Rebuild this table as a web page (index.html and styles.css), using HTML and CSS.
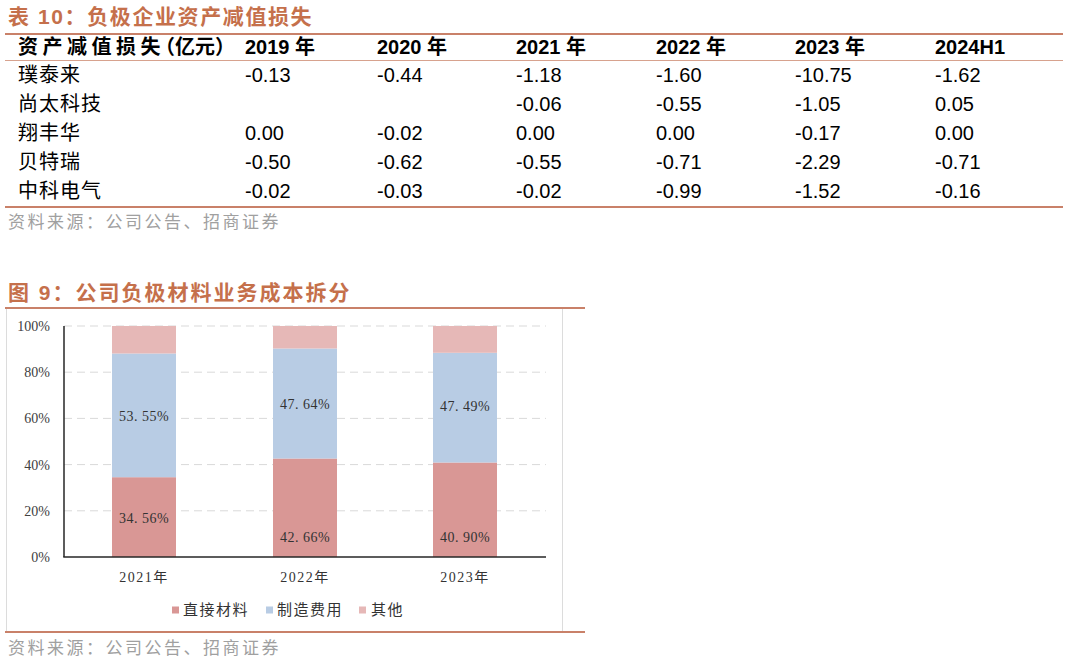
FILE: index.html
```html
<!DOCTYPE html>
<html lang="zh-CN">
<head>
<meta charset="utf-8">
<title>负极企业资产减值损失</title>
<link rel="stylesheet" href="styles.css">
</head>
<body>
<div class="page">
  <h2 class="caption">表 10：负极企业资产减值损失</h2>
  <table class="data">
    <colgroup>
      <col class="c-name"><col class="c-a"><col class="c-b"><col class="c-c"><col class="c-b"><col class="c-c"><col class="c-d">
    </colgroup>
    <thead>
      <tr><th><span class="h-main">资产减值损失</span><span class="h-unit">（亿元）</span></th><th>2019 年</th><th>2020 年</th><th>2021 年</th><th>2022 年</th><th>2023 年</th><th>2024H1</th></tr>
    </thead>
    <tbody>
      <tr><td>璞泰来</td><td>-0.13</td><td>-0.44</td><td>-1.18</td><td>-1.60</td><td>-10.75</td><td>-1.62</td></tr>
      <tr><td>尚太科技</td><td></td><td></td><td>-0.06</td><td>-0.55</td><td>-1.05</td><td>0.05</td></tr>
      <tr><td>翔丰华</td><td>0.00</td><td>-0.02</td><td>0.00</td><td>0.00</td><td>-0.17</td><td>0.00</td></tr>
      <tr><td>贝特瑞</td><td>-0.50</td><td>-0.62</td><td>-0.55</td><td>-0.71</td><td>-2.29</td><td>-0.71</td></tr>
      <tr><td>中科电气</td><td>-0.02</td><td>-0.03</td><td>-0.02</td><td>-0.99</td><td>-1.52</td><td>-0.16</td></tr>
    </tbody>
  </table>
  <p class="source">资料来源：公司公告、招商证券</p>

  <h2 class="caption fig-caption">图 9：公司负极材料业务成本拆分</h2>
  <div class="figure">
    <div class="chart">
      <svg class="chart-svg" width="555" height="322" viewBox="0 0 555 322">
        <g class="grid">
          <line x1="57" y1="17" x2="539" y2="17"/>
          <line x1="57" y1="63.2" x2="539" y2="63.2"/>
          <line x1="57" y1="109.4" x2="539" y2="109.4"/>
          <line x1="57" y1="155.6" x2="539" y2="155.6"/>
          <line x1="57" y1="201.8" x2="539" y2="201.8"/>
        </g>
        <g class="ylab">
          <text x="43" y="22">100%</text>
          <text x="43" y="68.2">80%</text>
          <text x="43" y="114.4">60%</text>
          <text x="43" y="160.6">40%</text>
          <text x="43" y="206.8">20%</text>
          <text x="43" y="253">0%</text>
        </g>
        <g class="bars">
          <rect class="s-red" x="105" y="168.2" width="64" height="79.8"/>
          <rect class="s-blue" x="105" y="44.5" width="64" height="123.7"/>
          <rect class="s-pink" x="105" y="17" width="64" height="27.5"/>
          <rect class="s-red" x="266" y="149.5" width="64" height="98.5"/>
          <rect class="s-blue" x="266" y="39.5" width="64" height="110"/>
          <rect class="s-pink" x="266" y="17" width="64" height="22.5"/>
          <rect class="s-red" x="426" y="153.5" width="64" height="94.5"/>
          <rect class="s-blue" x="426" y="43.8" width="64" height="109.7"/>
          <rect class="s-pink" x="426" y="17" width="64" height="26.8"/>
        </g>
        <g class="axis">
          <line x1="57" y1="17" x2="57" y2="248"/>
          <line x1="56.25" y1="248" x2="539" y2="248"/>
        </g>
        <g class="vlab">
          <text x="137" y="214">34. 56%</text>
          <text x="137" y="112">53. 55%</text>
          <text x="298" y="233">42. 66%</text>
          <text x="298" y="100">47. 64%</text>
          <text x="458" y="233">40. 90%</text>
          <text x="458" y="102">47. 49%</text>
        </g>
        <g class="xlab">
          <text x="137" y="273">2021年</text>
          <text x="298" y="273">2022年</text>
          <text x="458" y="273">2023年</text>
        </g>
        <g class="legend">
          <rect class="s-red" x="165" y="297.5" width="7" height="7"/>
          <text x="176" y="306">直接材料</text>
          <rect class="s-blue" x="259" y="297.5" width="7" height="7"/>
          <text x="270" y="306">制造费用</text>
          <rect class="s-pink" x="352" y="297.5" width="7" height="7"/>
          <text x="364" y="306">其他</text>
        </g>
      </svg>
    </div>
  </div>
  <p class="source source-bottom">资料来源：公司公告、招商证券</p>
</div>
</body>
</html>
```

FILE: styles.css
```css
html, body {
  margin: 0;
  padding: 0;
  background: #ffffff;
}

.page {
  padding-left: 5px;
  font-family: "Liberation Sans", "Noto Sans CJK SC", sans-serif;
  color: #000;
}

.caption {
  margin: 0;
  padding-left: 3px;
  height: 33px;
  line-height: 33px;
  font-size: 21px;
  font-weight: 700;
  color: #c5704b;
  letter-spacing: 1.6px;
  font-family: "Liberation Sans", "Noto Sans CJK SC", sans-serif;
}

.data {
  width: 1058px;
  table-layout: fixed;
  border-collapse: separate;
  border-spacing: 0;
  border-top: 2px solid #c98169;
  border-bottom: 2px solid #c98169;
}

.c-name { width: 240px; }
.c-a { width: 132px; }
.c-b { width: 139px; }
.c-c { width: 140px; }
.c-d { width: 128px; }

.data th,
.data td {
  padding: 0;
  text-align: left;
  font-size: 20px;
  white-space: nowrap;
}

.data th {
  height: 25px;
  line-height: 25px;
  font-weight: 700;
  border-bottom: 1px solid #d7a28e;
}

.data td {
  height: 29px;
  line-height: 29px;
  font-weight: 400;
}

.data th:first-child,
.data td:first-child {
  padding-left: 13px;
  letter-spacing: 1px;
}

.h-main {
  letter-spacing: 4.5px;
}

.h-unit {
  letter-spacing: 0;
  font-feature-settings: "halt" 1;
}

.source {
  margin: 0;
  padding-left: 3px;
  height: 26px;
  line-height: 26px;
  font-size: 17px;
  letter-spacing: 2.5px;
  color: #a0a0a0;
  font-family: "Noto Sans CJK SC", sans-serif;
}

.fig-caption {
  margin-top: 45px;
  height: 28px;
  line-height: 28px;
  width: 577px;
  letter-spacing: 2px;
  border-bottom: 2px solid #c98169;
}

.figure {
  width: 580px;
  border-bottom: 2px solid #c98169;
}

.chart {
  margin-left: 1px;
  width: 555px;
  height: 322px;
  border-left: 1px solid #dcdcdc;
  border-right: 1px solid #dcdcdc;
}

.chart-svg {
  display: block;
}

.source-bottom {
  height: 28px;
  line-height: 28px;
}

.grid line {
  stroke: #d9d9d9;
  stroke-width: 1;
  stroke-dasharray: 8 5;
}

.axis line {
  stroke: #262626;
  stroke-width: 1.5;
}

.s-red { fill: #d99795; }
.s-blue { fill: #b8cce4; }
.s-pink { fill: #e6b8b7; }

.ylab text {
  font-family: "Liberation Serif", "Noto Sans CJK SC", serif;
  font-size: 14px;
  fill: #404040;
  text-anchor: end;
}

.vlab text {
  font-family: "Liberation Serif", "Noto Sans CJK SC", serif;
  font-size: 14px;
  letter-spacing: 0.5px;
  fill: #333333;
  text-anchor: middle;
}

.xlab text {
  font-family: "Liberation Serif", "Noto Sans CJK SC", serif;
  font-size: 14px;
  letter-spacing: 1.5px;
  fill: #333333;
  text-anchor: middle;
}

.legend text {
  font-family: "Noto Sans CJK SC", serif;
  font-size: 15px;
  letter-spacing: 1.5px;
  fill: #333333;
}
```
